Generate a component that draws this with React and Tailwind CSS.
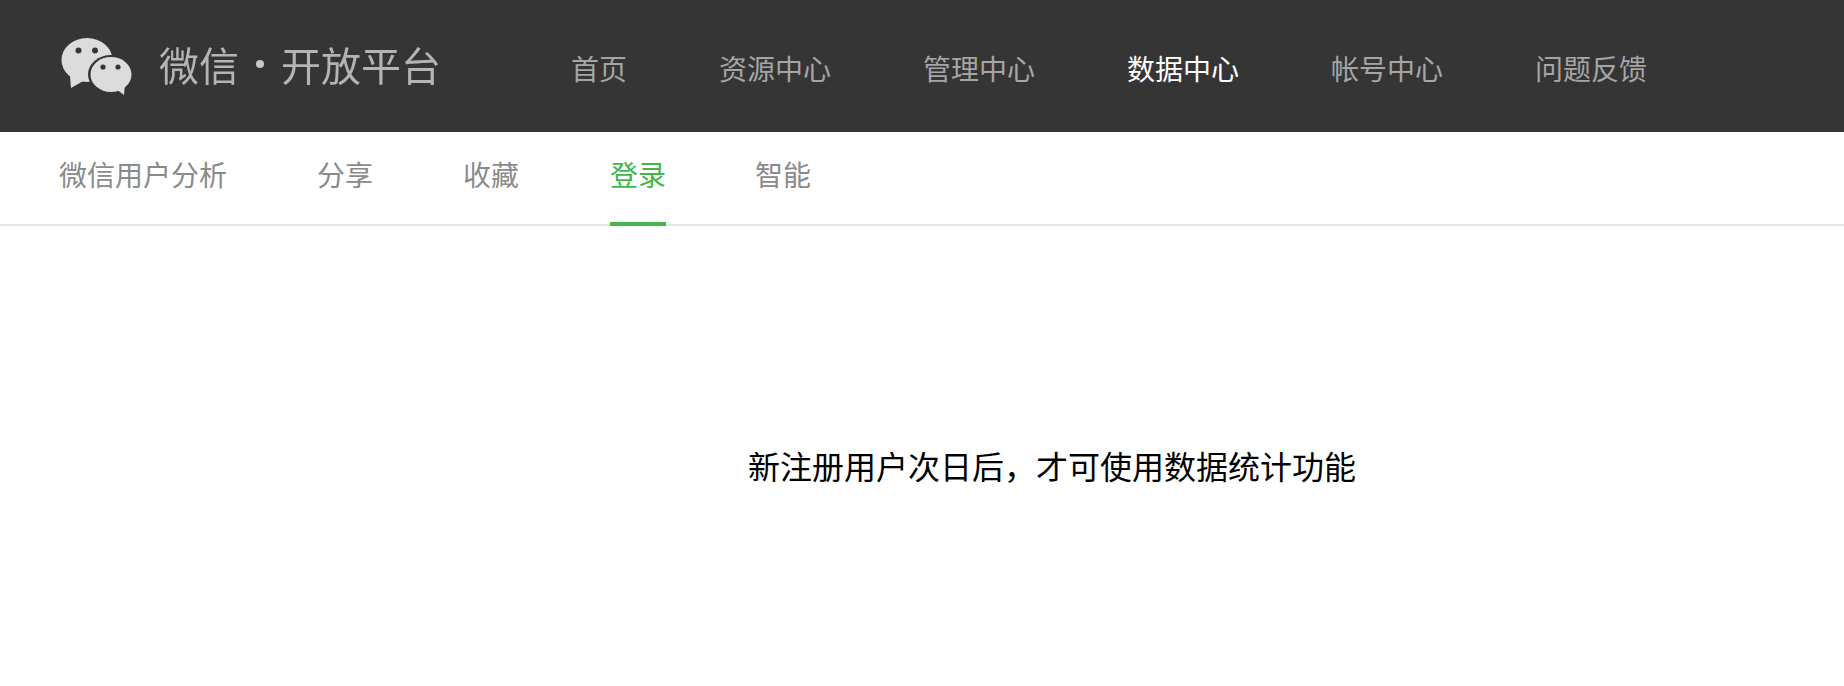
import React from "react";

const mainNav = ["首页", "资源中心", "管理中心", "数据中心", "帐号中心", "问题反馈"];
const subNav = ["微信用户分析", "分享", "收藏", "登录", "智能"];

// WeChat logo, two overlapping speech bubbles
function Logo() {
  return (
    <svg width="72" height="60" viewBox="0 0 72 60" className="shrink-0">
      <ellipse cx="26" cy="24" rx="25.5" ry="22" fill="#dcdcdc" />
      <path d="M9 40 L10 52 L24 44 Z" fill="#dcdcdc" />
      <ellipse cx="50" cy="38.5" rx="23" ry="19.5" fill="#353535" />
      <ellipse cx="50" cy="38.5" rx="20.5" ry="17.5" fill="#dcdcdc" />
      <path d="M55 53 L63 59 L64 48 Z" fill="#dcdcdc" />
      <circle cx="17.5" cy="14.5" r="3" fill="#353535" />
      <circle cx="34" cy="14.5" r="3" fill="#353535" />
      <circle cx="42" cy="31" r="2.6" fill="#353535" />
      <circle cx="57" cy="31" r="2.6" fill="#353535" />
    </svg>
  );
}

export default function App() {
  return (
    <div className="min-h-[686px] bg-white font-['Noto_Sans_CJK_SC','Noto_Sans',sans-serif]">
      {/* Top bar */}
      <header className="flex h-[132px] items-center bg-[#353535] pl-[61px]">
        <Logo />
        <div className="ml-[26px] mb-[4px] flex w-[281px] shrink-0 items-center whitespace-nowrap text-[40px] leading-none text-[#b4b4b4] blur-[0.5px]">
          <span>微信</span>
          <span className="mx-[17px] size-[8px] shrink-0 rounded-full bg-[#c8c8c8]" />
          <span>开放平台</span>
        </div>
        <nav className="ml-[131px] flex gap-[92px] pt-[4px] text-[28px] leading-none text-[#a5a5a5]">
          {mainNav.map((item) => (
            <span key={item} className={item === "数据中心" ? "text-white" : ""}>
              {item}
            </span>
          ))}
        </nav>
      </header>

      {/* Sub navigation */}
      <nav className="flex h-[94px] gap-[90px] border-b-2 border-[#e5e5e8] pl-[59px] text-[28px] text-[#8a8a8a]">
        {subNav.map((item) => (
          <span
            key={item}
            className={
              item === "登录"
                ? "ml-px -mr-px h-[94px] border-b-4 border-[#44b549] pt-[28px] leading-none text-[#44b549]"
                : "pt-[28px] leading-none"
            }
          >
            {item}
          </span>
        ))}
      </nav>

      {/* Empty state */}
      <div className="flex justify-center pt-[220px] pl-[260px] text-[32px] leading-[38px] text-black">
        新注册用户次日后，才可使用数据统计功能
      </div>
    </div>
  );
}
